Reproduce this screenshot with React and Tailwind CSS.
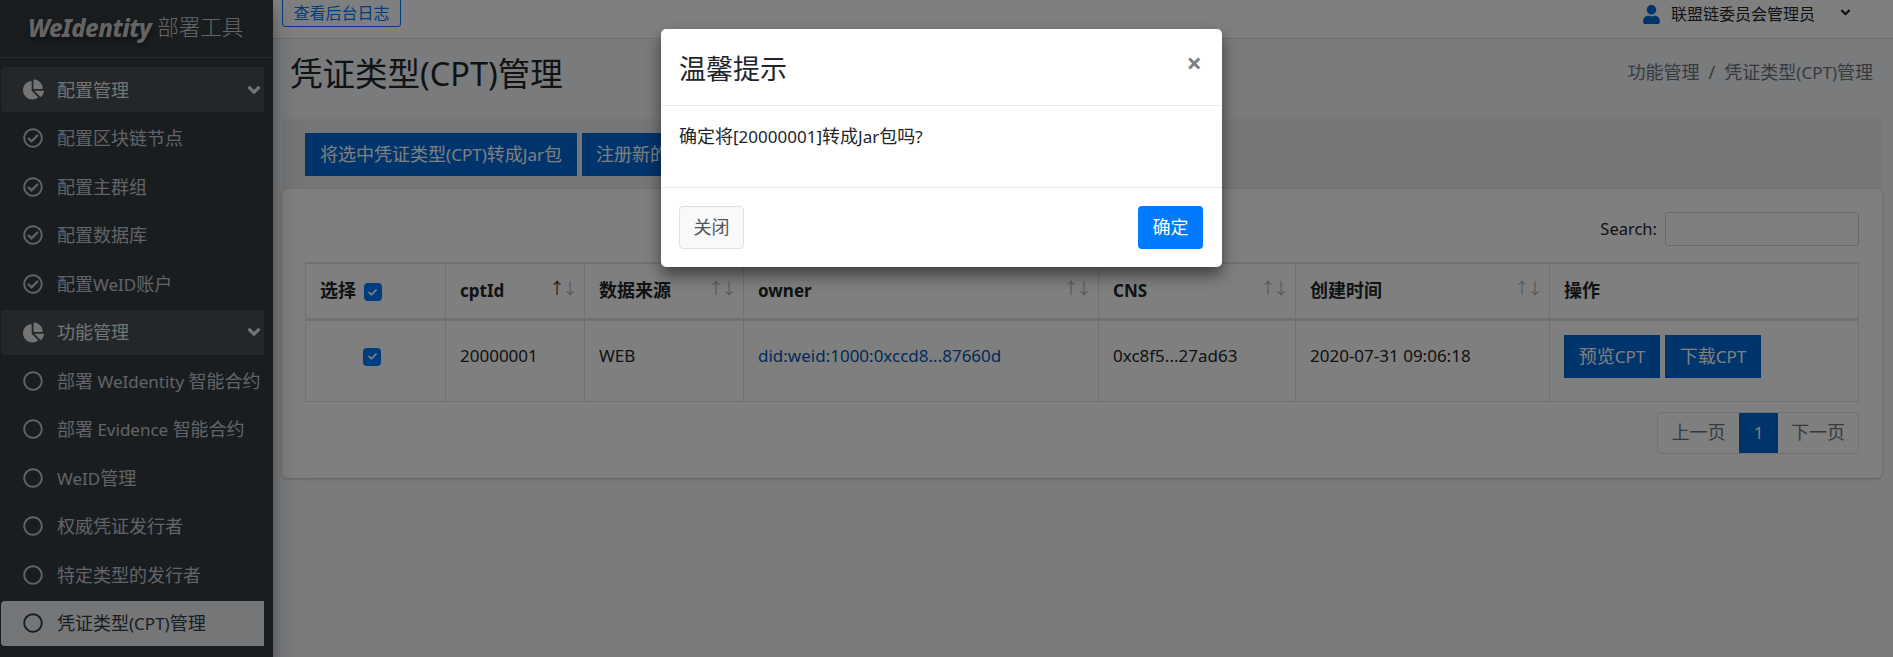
import { FaChartPie, FaRegCheckCircle, FaRegCircle, FaAngleDown, FaUser, FaCheck } from 'react-icons/fa';

const FONT = 'font-["Noto_Sans","Noto_Sans_CJK_SC",sans-serif]';

// Texto latino un poco más pequeño que el CJK
const L = ({ children }) => <span className="text-[17px]">{children}</span>;

// Grupos del menú lateral
const MENU = [
  { type: 'group', label: '配置管理' },
  { type: 'done', label: <>配置区块链节点</> },
  { type: 'done', label: <>配置主群组</> },
  { type: 'done', label: <>配置数据库</> },
  { type: 'done', label: <>配置<L>WeID</L>账户</> },
  { type: 'group', label: '功能管理' },
  { type: 'todo', label: <>部署<L> WeIdentity </L>智能合约</> },
  { type: 'todo', label: <>部署<L> Evidence </L>智能合约</> },
  { type: 'todo', label: <><L>WeID</L>管理</> },
  { type: 'todo', label: <>权威凭证发行者</> },
  { type: 'todo', label: <>特定类型的发行者</> },
  { type: 'active', label: <>凭证类型<L>(CPT)</L>管理</> },
];

const MenuItem = ({ item }) => {
  if (item.type === 'group') {
    return (
      <div className="flex h-[45px] w-[263px] shrink-0 items-center rounded-l-[4px] bg-[#494e53] pl-[22px] text-[#e8e8e8]">
        <FaChartPie className="h-[21px] w-[21px] shrink-0" />
        <span className="ml-[13px] flex-1 pt-[1px] text-[18px]">{item.label}</span>
        <FaAngleDown className="h-[20px] w-[20px]" />
      </div>
    );
  }
  const active = item.type === 'active';
  const Icon = item.type === 'done' ? FaRegCheckCircle : FaRegCircle;
  return (
    <div className={`flex h-[45px] w-[263px] shrink-0 items-center whitespace-nowrap rounded-l-[4px] pl-[22px] text-[18px] ${active ? 'bg-[#e9ecef] text-[#343a40]' : 'text-[#c2c7d0]'}`}>
      <Icon className="h-[20px] w-[20px] shrink-0" />
      <span className="ml-[14px] pt-[1px]">{item.label}</span>
    </div>
  );
};

const Sidebar = () => (
  <aside className="z-10 flex h-[657px] w-[273px] shrink-0 flex-col bg-[#343a40] shadow-[0_14px_28px_rgba(0,0,0,0.25),0_10px_10px_rgba(0,0,0,0.22)]">
    <div className="flex h-[58px] items-center border-b border-[#4b545c] pb-[2px] pl-[28px]">
      <span className="text-[24px] font-extrabold italic leading-none tracking-[-0.5px] text-[#c9c9c9] [text-shadow:0_3px_5px_rgba(0,0,0,0.5)]">WeIdentity</span>
      <span className="ml-[6px] text-[21.5px] font-light text-[#c9c9c9]">部署工具</span>
    </div>
    <nav className="mt-[9px] flex flex-col gap-[3.5px] pl-[1px]">
      {MENU.map((item, i) => <MenuItem key={i} item={item} />)}
    </nav>
  </aside>
);

const Checkbox = () => (
  <span className="inline-flex h-[18px] w-[18px] items-center justify-center rounded-[4px] bg-[#007bff] align-middle">
    <FaCheck className="h-[9px] w-[9px] text-white" />
  </span>
);

const HEAD = 'border border-t-2 border-b-[3px] border-[#dee2e6] px-[14px] text-left font-bold';
const CELL = 'border border-[#dee2e6] px-[14px] pt-[13px] align-top leading-[43px]';

const SortHead = ({ children, dark }) => (
  <th className={`relative ${HEAD}`}>
    {children}
    <span className="absolute right-[9px] top-[16px] text-[16px] font-normal leading-none tracking-[-3px] text-[#b5b5b5]">
      <span className={dark ? 'text-[#333]' : ''}>↑</span>↓
    </span>
  </th>
);

const PrimaryButton = ({ children, className = '' }) => (
  <button className={`h-[43px] bg-[#0069d9] text-[18px] text-white ${className}`}>{children}</button>
);

const CptTable = () => (
  <table className="w-[1553px] table-fixed border-collapse text-[17px] text-[#212529]">
    <colgroup>
      <col className="w-[140px]" />
      <col className="w-[139px]" />
      <col className="w-[159px]" />
      <col className="w-[355px]" />
      <col className="w-[197px]" />
      <col className="w-[254px]" />
      <col className="w-[309px]" />
    </colgroup>
    <thead>
      <tr className="h-[56px]">
        <th className={`${HEAD} text-[18px]`}>
          选择 <span className="ml-[3px]"><Checkbox /></span>
        </th>
        <SortHead dark>cptId</SortHead>
        <SortHead><span className="text-[18px]">数据来源</span></SortHead>
        <SortHead>owner</SortHead>
        <SortHead>CNS</SortHead>
        <SortHead><span className="text-[18px]">创建时间</span></SortHead>
        <th className={`${HEAD} text-[18px]`}>操作</th>
      </tr>
    </thead>
    <tbody>
      <tr className="h-[82px]">
        <td className="border border-[#dee2e6] pl-[57px] pt-[13px] align-top leading-[43px]"><Checkbox /></td>
        <td className={CELL}>20000001</td>
        <td className={CELL}>WEB</td>
        <td className={`${CELL} text-[#0056b3]`}>did:weid:1000:0xccd8...87660d</td>
        <td className={CELL}>0xc8f5...27ad63</td>
        <td className={CELL}>2020-07-31 09:06:18</td>
        <td className="border border-[#dee2e6] px-[14px] pt-[14px] align-top">
          <div className="flex gap-[5px]">
            <PrimaryButton className="w-[96px]">预览<L>CPT</L></PrimaryButton>
            <PrimaryButton className="w-[96px]">下载<L>CPT</L></PrimaryButton>
          </div>
        </td>
      </tr>
    </tbody>
  </table>
);

const Pagination = () => (
  <div className="mt-[10px] flex h-[42px] w-[202px] self-end rounded-[4px] border border-[#dee2e6] text-[18px] text-[#6c757d]">
    <span className="flex w-[81px] items-center justify-center">上一页</span>
    <span className="flex w-[39px] items-center justify-center bg-[#0069d9] text-[17px] text-white">1</span>
    <span className="flex flex-1 items-center justify-center">下一页</span>
  </div>
);

const Main = () => (
  <main className="flex h-[657px] min-w-0 flex-1 flex-col bg-[#f4f6f9]">
    <header className="flex h-[39px] shrink-0 items-start justify-between border-b border-[#dee2e6] bg-white pl-[9px]">
      <button className="mt-[-1px] h-[28px] w-[119px] rounded-b-[3px] border border-[#007bff] text-[16px] leading-none text-[#007bff]">查看后台日志</button>
      <div className="mr-[40px] mt-[4px] flex items-center text-[#212529]">
        <FaUser className="h-[19px] w-[19px] text-[#0069d9]" />
        <span className="ml-[10px] text-[16px] leading-[20px]">联盟链委员会管理员</span>
        <FaAngleDown className="ml-[23px] h-[15px] w-[15px] -translate-y-[2px]" />
      </div>
    </header>

    <div className="flex h-[80px] shrink-0 items-start justify-between pl-[17px] pr-[20px]">
      <h1 className="mt-[11px] text-[32.5px] font-normal leading-[48px] text-[#212529]">凭证类型(CPT)管理</h1>
      <div className="mt-[20px] text-[18px] leading-[26px] text-[#6c757d]">
        功能管理<span className="mx-[9px]">/</span>凭证类型<L>(CPT)</L>管理
      </div>
    </div>

    <div className="ml-[9px] mr-[11px] flex h-[70px] shrink-0 items-start gap-[5px] bg-[#eaecef] pl-[23px] pr-[8px] pt-[14px]">
      <PrimaryButton className="w-[272px]">将选中凭证类型<L>(CPT)</L>转成<L>Jar</L>包</PrimaryButton>
      <PrimaryButton className="px-[14px]">注册新的<L>CPT</L></PrimaryButton>
    </div>

    <section className="ml-[9px] mr-[11px] flex h-[289px] shrink-0 flex-col rounded-[5px] bg-white px-[23px] shadow-[0_0_1px_rgba(0,0,0,0.13),0_1px_3px_rgba(0,0,0,0.2)]">
      <div className="mt-[23px] flex h-[34px] items-center justify-end text-[16.5px] text-[#212529]">
        <span className="mr-[8px]">Search:</span>
        <span className="h-[34px] w-[194px] rounded-[3px] border border-[#ced4da]" />
      </div>
      <div className="mt-[16px]"><CptTable /></div>
      <Pagination />
    </section>
  </main>
);

const Modal = () => (
  <div className="absolute left-[661px] top-[29px] flex h-[238px] w-[561px] flex-col rounded-[5px] bg-white text-[#212529] shadow-[0_8px_16px_rgba(0,0,0,0.5)]">
    <div className="relative flex h-[77px] shrink-0 items-center border-b border-[#e9ecef] pl-[18px]">
      <span className="mt-[2px] text-[27px] leading-none">温馨提示</span>
      <span className="absolute right-[20px] top-[20px] text-[27px] font-bold leading-[27px] text-[#7f7f7f]">×</span>
    </div>
    <div className="h-[81px] shrink-0 pl-[18px] pt-[18px] text-[18px] leading-[24px]">确定将<L>[20000001]</L>转成<L>Jar</L>包吗<L>?</L></div>
    <div className="flex flex-1 items-center justify-between border-t border-[#e9ecef] pl-[18px] pr-[19px]">
      <button className="h-[43px] w-[65px] rounded-[4px] border border-[#dee2e6] bg-[#f8f9fa] text-[18px] text-[#555]">关闭</button>
      <button className="h-[43px] w-[65px] rounded-[4px] bg-[#007bff] text-[18px] text-white">确定</button>
    </div>
  </div>
);

const App = () => (
  <div className={`relative flex h-[657px] w-[1893px] overflow-hidden ${FONT}`}>
    <Sidebar />
    <Main />
    <div className="absolute inset-0 z-20 bg-black/50" />
    <div className="absolute inset-0 z-30"><Modal /></div>
  </div>
);

export default App;
